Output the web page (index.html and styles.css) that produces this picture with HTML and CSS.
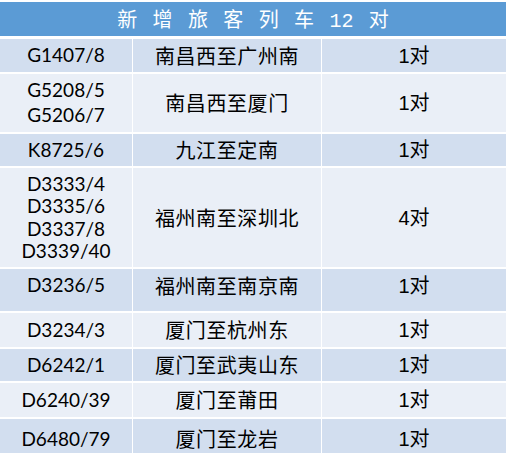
FILE: index.html
```html
<!DOCTYPE html>
<html lang="zh-CN">
<head>
<meta charset="utf-8">
<title>新增旅客列车12对</title>
<link rel="stylesheet" href="styles.css">
</head>
<body>
<div class="sheet">
  <div class="title">新 增 旅 客 列 车 <span class="num">12</span> 对</div>

  <div class="row dark">
    <div class="cell code">G1407/8</div>
    <div class="cell route">南昌西至广州南</div>
    <div class="cell pairs">1对</div>
  </div>
  <div class="row light">
    <div class="cell code loose">G5208/5<br>G5206/7</div>
    <div class="cell route">南昌西至厦门</div>
    <div class="cell pairs">1对</div>
  </div>
  <div class="row dark">
    <div class="cell code">K8725/6</div>
    <div class="cell route">九江至定南</div>
    <div class="cell pairs">1对</div>
  </div>
  <div class="row light">
    <div class="cell code">D3333/4<br>D3335/6<br>D3337/8<br>D3339/40</div>
    <div class="cell route">福州南至深圳北</div>
    <div class="cell pairs">4对</div>
  </div>
  <div class="row dark top">
    <div class="cell code">D3236/5</div>
    <div class="cell route">福州南至南京南</div>
    <div class="cell pairs">1对</div>
  </div>
  <div class="row light">
    <div class="cell code">D3234/3</div>
    <div class="cell route">厦门至杭州东</div>
    <div class="cell pairs">1对</div>
  </div>
  <div class="row dark">
    <div class="cell code">D6242/1</div>
    <div class="cell route">厦门至武夷山东</div>
    <div class="cell pairs">1对</div>
  </div>
  <div class="row light">
    <div class="cell code">D6240/39</div>
    <div class="cell route">厦门至莆田</div>
    <div class="cell pairs">1对</div>
  </div>
  <div class="row dark">
    <div class="cell code">D6480/79</div>
    <div class="cell route">厦门至龙岩</div>
    <div class="cell pairs">1对</div>
  </div>
</div>
</body>
</html>
```

FILE: styles.css
```css
html, body {
  margin: 0;
  padding: 0;
  background: #ffffff;
}

body {
  width: 506px;
  height: 453px;
  overflow: hidden;
  color: #000000;
}

.sheet {
  display: grid;
  grid-template-columns: 132px 188px 184px;
  grid-template-rows: auto 33px 58px 32px 99px 42px 34px 32px 34px 40px;
  column-gap: 1px;
  row-gap: 2px;
  padding-top: 2px;
  background: #ffffff;
}

.title {
  grid-column: 1 / -1;
  height: 34px;
  margin-bottom: 1px;
  background: #5b9bd5;
  color: #ffffff;
  font-family: "Noto Sans CJK SC", sans-serif;
  font-size: 20px;
  line-height: 34px;
  word-spacing: 10.9px;
  text-align: center;
  white-space: pre;
}

.title .num {
  font-family: "Liberation Mono", monospace;
  font-size: 20px;
  word-spacing: 0;
}

.row {
  display: contents;
}

.cell {
  display: flex;
  align-items: center;
  justify-content: center;
  text-align: center;
}

.dark .cell {
  background: #d2deef;
}

.light .cell {
  background: #eaeff7;
}

.top .cell {
  align-items: flex-start;
  padding-top: 5px;
}

.code {
  font-family: Lato, "Liberation Sans", sans-serif;
  font-size: 19px;
  line-height: 22.3px;
}

.code.loose {
  line-height: 24.6px;
}

.route {
  font-family: "Noto Sans CJK SC", sans-serif;
  font-size: 20px;
  line-height: 24px;
  letter-spacing: 0.6px;
}

.pairs {
  font-family: "Liberation Sans", "Noto Sans CJK SC", sans-serif;
  font-size: 20px;
  line-height: 24px;
}
```
